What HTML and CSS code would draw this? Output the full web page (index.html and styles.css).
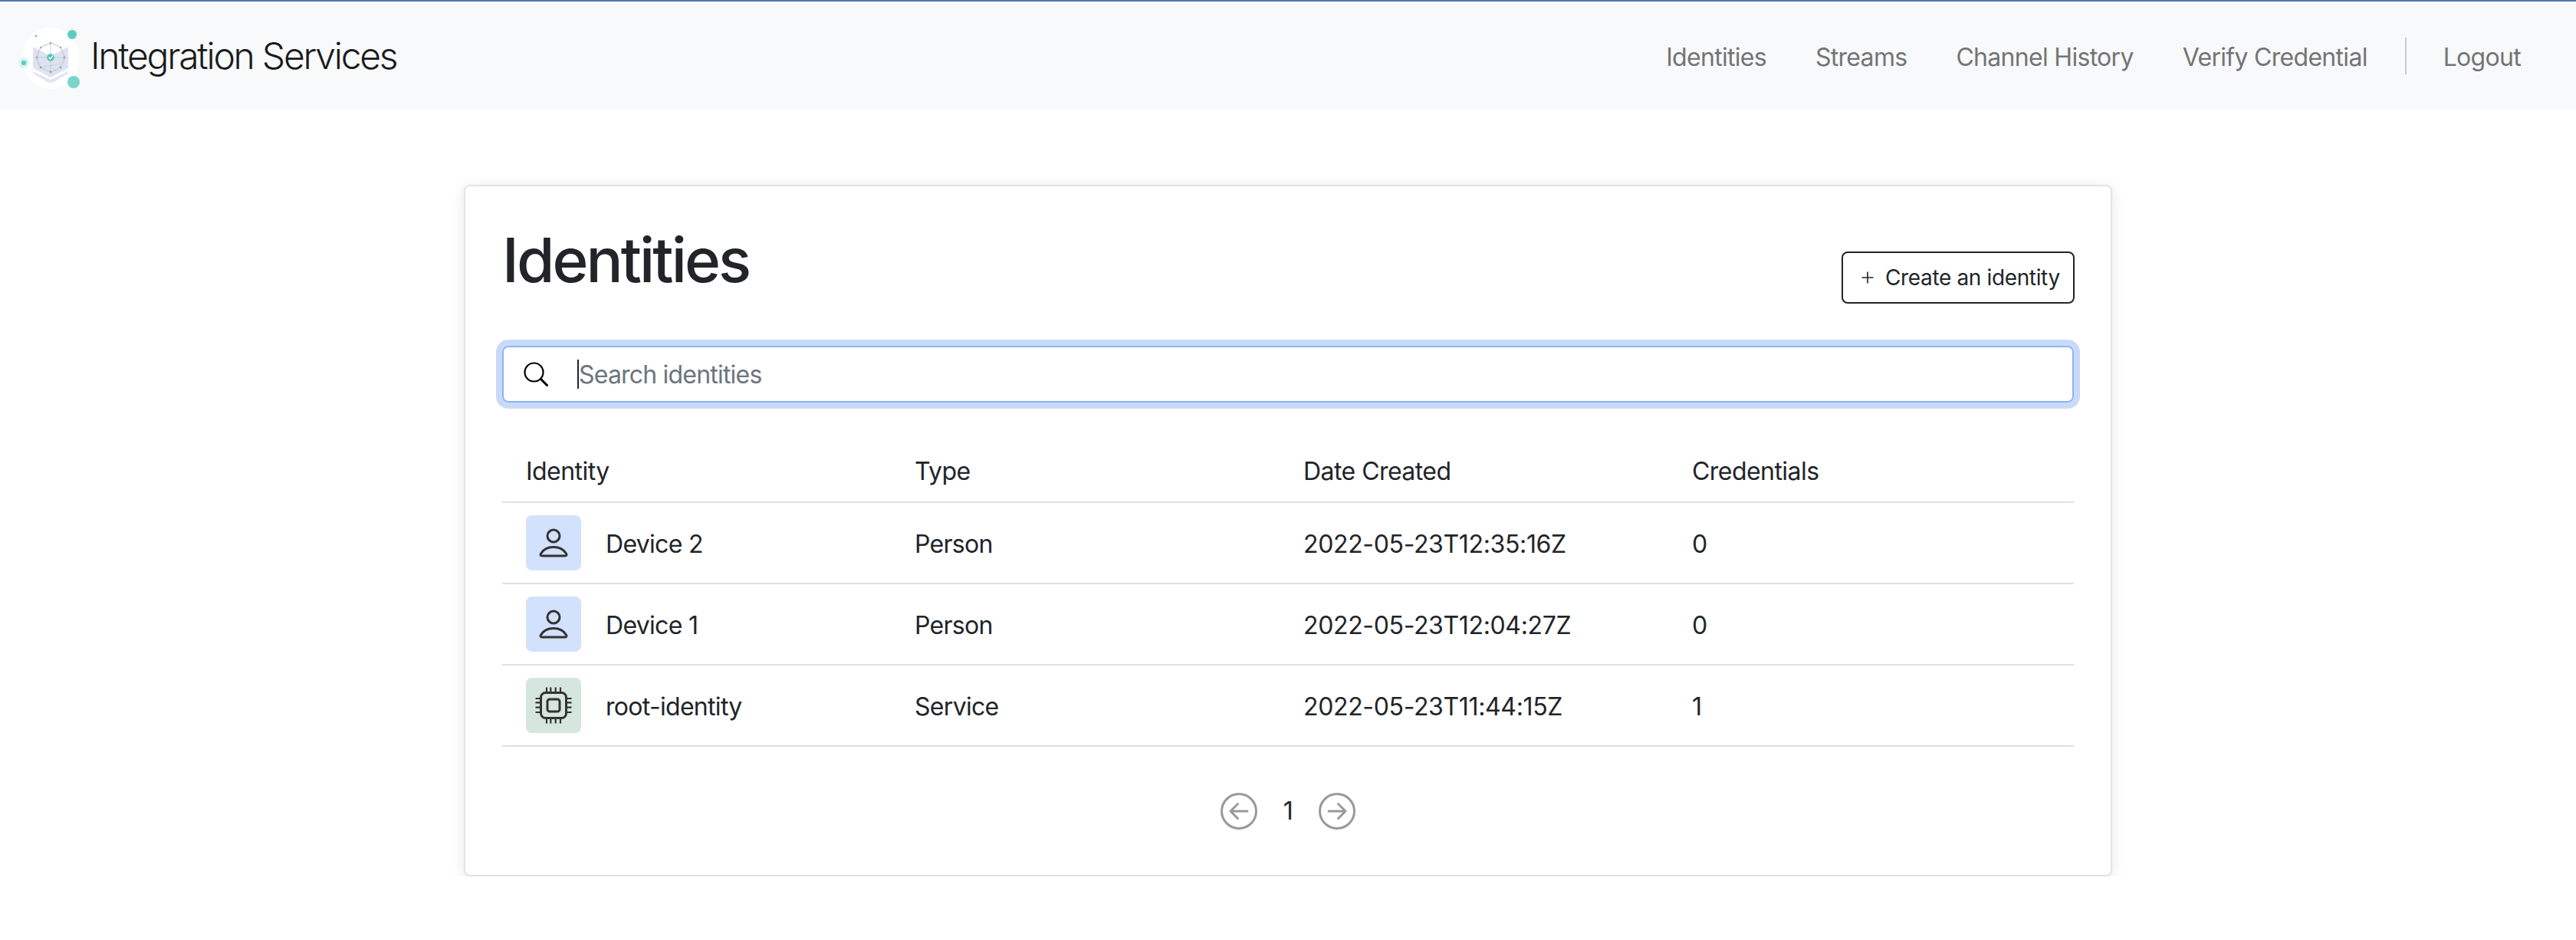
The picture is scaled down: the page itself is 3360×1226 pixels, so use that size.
FILE: index.html
```html
<!DOCTYPE html>
<html lang="en">
<head>
<meta charset="UTF-8">
  <title>Integration Services</title>
<link rel="stylesheet" href="styles.css">
</head>

<body>
<nav class="navbar">
    <a class="brand" href="#">
        <svg class="brand-logo" viewBox="0 0 110 100" width="110" height="100">
            <defs><filter id="soft"><feGaussianBlur stdDeviation="0.4"/></filter></defs>
            <g filter="url(#soft)">
                <ellipse cx="56" cy="53" rx="37" ry="40" fill="#ffffff"/>
                <circle cx="87" cy="19" r="3" fill="#d9f6f2"/>
                <circle cx="84" cy="22" r="6" fill="#5fcbbf"/>
                <circle cx="86" cy="84" r="8" fill="#7ad4c8"/>
                <circle cx="21" cy="59" r="6.500" fill="#cdf5f1"/>
                <circle cx="21" cy="59" r="3" fill="#5cc9bc"/>
                <circle cx="37" cy="24" r="1.400" fill="#5cc9bc"/>
                <path d="M33 38 L56 50 L79 38 V66 L56 78 L33 66 Z" fill="#dfe3f1"/>
                <path d="M33 70 L56 81 L79 70 L79 73 L60 84 Q56 86 52 84 L33 73 Z" fill="#e1e5f3"/>
                <circle cx="56" cy="52" r="18" fill="none" stroke="#c7ccda" stroke-width="0.8"/>
                <path d="M56 33 L43 39 L38 52 L43 65 L56 71 L69 65 L74 52 L69 39 Z M38 52 H74 M56 33 V71 M43 65 L69 60" fill="none" stroke="#bcc3d4" stroke-width="0.7"/>
                <g fill="#9ba3ba">
                    <circle cx="56" cy="33" r="1.200"/><circle cx="43" cy="39" r="1.200"/><circle cx="69" cy="39" r="1.200"/>
                    <circle cx="38" cy="52" r="1.400"/><circle cx="74" cy="52" r="1.400"/>
                    <circle cx="43" cy="65" r="1.400"/><circle cx="69" cy="65" r="1.400"/><circle cx="56" cy="71" r="1.400"/>
                </g>
                <circle cx="56" cy="52" r="4.800" fill="#52c6b8"/>
                <path d="M53.500 51.500 L55.500 54 L59 49.500" fill="none" stroke="#ffffff" stroke-width="1.300"/>
            </g>
        </svg>
        <span>Integration Services</span>
    </a>
    <div class="nav-links">
        <a href="#">Identities</a>
        <a href="#">Streams</a>
        <a href="#">Channel History</a>
        <a href="#">Verify Credential</a>
        <span class="nav-sep"></span>
        <a href="#">Logout</a>
    </div>
</nav>

<main class="card">
    <div class="card-head">
        <h1 class="titulo">Identities</h1>
        <button class="btn-create" type="button">
            <svg viewBox="0 0 16 16" width="16" height="16"><path d="M8 0.5 V15.500 M0.500 8 H15.500" stroke="#212529" stroke-width="1.600" fill="none"/></svg>
            Create an identity
        </button>
    </div>

    <div class="search">
        <svg class="search-icon" viewBox="0 0 32 32" width="32" height="32">
            <circle cx="13.500" cy="13.500" r="12" fill="none" stroke="#000" stroke-width="2.200"/>
            <path d="M22.500 22.500 L30.500 30.500" stroke="#000" stroke-width="3" stroke-linecap="round"/>
        </svg>
        <span class="caret"></span>
        <input type="text" placeholder="Search identities">
    </div>

    <table class="tabla">
        <thead>
            <tr><th>Identity</th><th>Type</th><th>Date Created</th><th>Credentials</th></tr>
        </thead>
        <tbody>
            <tr>
                <td class="celda-who">
                    <div class="who">
                        <span class="avatar avatar-person">
                            <svg viewBox="0 0 72 72" width="72" height="72"><circle cx="36" cy="27" r="8" fill="none" stroke="#333" stroke-width="3"/><path d="M21 53 H51 C53 53 53.500 51.500 52.500 50 C49.500 45 44 41.500 36 41.500 S22.500 45 19.500 50 C18.500 51.500 19 53 21 53 Z" fill="none" stroke="#333" stroke-width="3" stroke-linejoin="round"/></svg>
                        </span>
                        <span class="nombre">Device 2</span>
                    </div>
                </td>
                <td>Person</td>
                <td class="fecha">2022-05-23T12:35:16Z</td>
                <td>0</td>
            </tr>
            <tr>
                <td class="celda-who">
                    <div class="who">
                        <span class="avatar avatar-person">
                            <svg viewBox="0 0 72 72" width="72" height="72"><circle cx="36" cy="27" r="8" fill="none" stroke="#333" stroke-width="3"/><path d="M21 53 H51 C53 53 53.500 51.500 52.500 50 C49.500 45 44 41.500 36 41.500 S22.500 45 19.500 50 C18.500 51.500 19 53 21 53 Z" fill="none" stroke="#333" stroke-width="3" stroke-linejoin="round"/></svg>
                        </span>
                        <span class="nombre">Device 1</span>
                    </div>
                </td>
                <td>Person</td>
                <td class="fecha">2022-05-23T12:04:27Z</td>
                <td>0</td>
            </tr>
            <tr>
                <td class="celda-who">
                    <div class="who">
                        <span class="avatar avatar-chip">
                            <svg viewBox="0 0 72 72" width="72" height="72">
                                <rect x="19.500" y="19.500" width="33" height="33" rx="6" fill="none" stroke="#333" stroke-width="3"/>
                                <rect x="28" y="28" width="16" height="16" rx="3" fill="none" stroke="#333" stroke-width="3"/>
                                <path d="M27 12.500 V18 M32.300 12.500 V18 M38.700 12.500 V18 M45 12.500 V18 M27 54 V59.500 M32.300 54 V59.500 M38.700 54 V59.500 M45 54 V59.500 M12.500 27 H18 M12.500 32.300 H18 M12.500 38.700 H18 M12.500 45 H18 M54 27 H59.500 M54 32.300 H59.500 M54 38.700 H59.500 M54 45 H59.500" stroke="#333" stroke-width="2.200" fill="none"/>
                            </svg>
                        </span>
                        <span class="nombre">root-identity</span>
                    </div>
                </td>
                <td>Service</td>
                <td class="fecha">2022-05-23T11:44:15Z</td>
                <td>1</td>
            </tr>
        </tbody>
    </table>

    <div class="paginas">
        <svg viewBox="0 0 48 48" width="48" height="48"><circle cx="24" cy="24" r="22.500" fill="none" stroke="#999" stroke-width="3"/><path d="M35 24 H13 M22.500 14.500 L13 24 L22.500 33.500" fill="none" stroke="#999" stroke-width="3" stroke-linecap="round" stroke-linejoin="round"/></svg>
        <span class="pagina-num">1</span>
        <svg viewBox="0 0 48 48" width="48" height="48"><circle cx="24" cy="24" r="22.500" fill="none" stroke="#999" stroke-width="3"/><path d="M13 24 H35 M25.500 14.500 L35 24 L25.500 33.500" fill="none" stroke="#999" stroke-width="3" stroke-linecap="round" stroke-linejoin="round"/></svg>
    </div>
</main>
</body>
</html>
```

FILE: styles.css
```css
body {
    margin: 0;
    padding: 0;
    font-family: Inter, "Liberation Sans", sans-serif;
    font-size: 32px;
    line-height: 48px;
    letter-spacing: -0.55px;
    color: #212529;
    background-color: #fff;
}

a {
    text-decoration: none;
}

/* top bar */
.navbar {
    display: flex;
    justify-content: space-between;
    align-items: center;
    box-sizing: border-box;
    height: 144px;
    padding: 0 40px 0 10px;
    border-top: 2px solid #5079ae;
    background-color: #f8f9fa;
}

.brand {
    display: flex;
    align-items: center;
    color: #1b1b1b;
    font-size: 48px;
    font-weight: 300;
    letter-spacing: -2.25px;
}

.brand-logo {
    display: block;
    margin-right: -2px;
}

.nav-links {
    display: flex;
    align-items: center;
    letter-spacing: -0.7px;
}

.nav-links a {
    padding: 4px 32px 0;
    color: #737475;
}

.nav-sep {
    width: 2px;
    height: 48px;
    margin: 0 16px 0 17px;
    background-color: #c9cacb;
}

/* card */
.card {
    box-sizing: border-box;
    width: 2150px;
    margin: 97px auto 0;
    padding: 48px 48px 59px;
    border: 2px solid #e1e3e6;
    border-radius: 8px;
    box-shadow: 0 4px 18px rgba(0, 0, 0, 0.1);
    background-color: #fff;
}

.card-head {
    display: flex;
    justify-content: space-between;
    align-items: flex-end;
}

.titulo {
    margin: 0 0 9px;
    font-size: 80px;
    line-height: 96px;
    font-weight: 550;
    letter-spacing: -2.9px;
}

.btn-create {
    display: flex;
    align-items: center;
    gap: 15px;
    box-sizing: border-box;
    height: 68px;
    width: 304px;
    margin-right: -1px;
    padding: 0 0 0 24px;
    border: 2px solid #212529;
    border-radius: 8px;
    background-color: #fff;
    color: #212529;
    font-family: inherit;
    font-size: 28px;
    letter-spacing: -0.36px;
    white-space: nowrap;
}

/* search */
.search {
    display: flex;
    align-items: center;
    box-sizing: border-box;
    height: 74px;
    margin-top: 55px;
    padding-left: 26px;
    border: 2px solid #8ab4f8;
    border-radius: 8px;
    box-shadow: 0 0 0 8px #c9daf9;
}

.search-icon {
    flex: none;
}

.caret {
    flex: none;
    width: 2px;
    height: 38px;
    margin-left: 38px;
    background-color: #212529;
}

.search input {
    flex: 1;
    padding: 0;
    border: none;
    outline: none;
    background: transparent;
    font-family: inherit;
    font-size: 32px;
    letter-spacing: -0.8px;
    color: #212529;
}

.search input::placeholder {
    color: #6c757d;
    opacity: 1;
}

/* table */
.tabla {
    width: 100%;
    margin-top: 30px;
    border-collapse: collapse;
    table-layout: fixed;
}

.tabla th,
.tabla td {
    box-sizing: border-box;
    width: 507px;
    padding: 0 0 0 31px;
    border-bottom: 2px solid #dee2e6;
    text-align: left;
    font-weight: 400;
}

.tabla th {
    height: 100px;
    padding-bottom: 15px;
    vertical-align: bottom;
}

.tabla td {
    height: 106px;
    padding-top: 4px;
    letter-spacing: -0.7px;
}

.tabla th:last-child,
.tabla td:last-child {
    width: auto;
}

.tabla .celda-who {
    padding-top: 0;
}

.tabla .fecha {
    letter-spacing: -0.35px;
}

.who {
    display: flex;
    align-items: center;
    gap: 32px;
}

.nombre {
    padding-top: 4px;
}

.avatar {
    display: block;
    width: 72px;
    height: 72px;
    border-radius: 8px;
}

.avatar svg {
    display: block;
}

.avatar-person {
    background-color: #d2e1fc;
}

.avatar-chip {
    background-color: #d4e6dd;
}

/* pagination */
.paginas {
    display: flex;
    justify-content: center;
    align-items: center;
    margin-top: 60px;
}

.pagina-num {
    width: 80px;
    text-align: center;
}
```
